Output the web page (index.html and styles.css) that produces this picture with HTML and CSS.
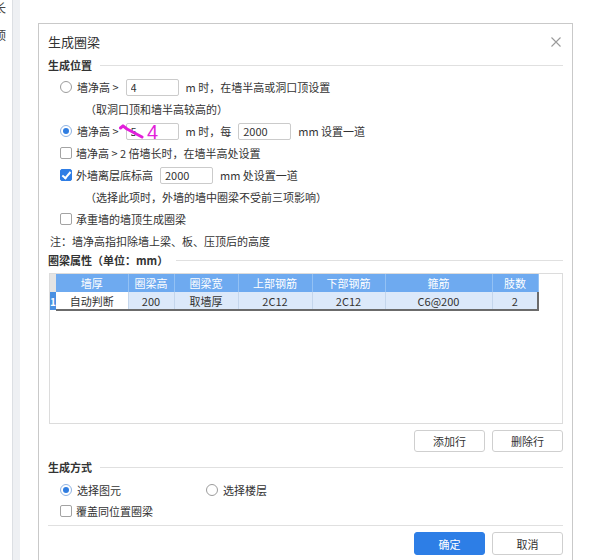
FILE: index.html
```html
<!DOCTYPE html>
<html lang="zh-CN">
<head>
    <meta charset="UTF-8">
    <title>生成圈梁</title>
    <link rel="stylesheet" href="styles.css">
</head>
<body>
    <aside class="side">
        <div class="side-text">长<br>顶</div>
    </aside>
    <div class="gutter"></div>

    <main class="stage">
        <div class="dialog">
            <div class="dialog-head">
                <span class="dialog-title">生成圈梁</span>
                <svg class="close" width="10" height="10" viewBox="0 0 10 10">
                    <path d="M0.5 0.5 L9.5 9.5 M9.5 0.5 L0.5 9.5" stroke="#9a9a9a" stroke-width="1.1" fill="none"/>
                </svg>
            </div>

            <!-- 生成位置 -->
            <div class="legend"><span>生成位置</span></div>
            <div class="row">
                <span class="radio"></span>
                <span>墙净高 &gt;</span>
                <input class="field" type="text" value="4">
                <span>m 时，在墙半高或洞口顶设置</span>
            </div>
            <div class="row sub">（取洞口顶和墙半高较高的）</div>
            <div class="row marked">
                <span class="radio on"></span>
                <span>墙净高 &gt;</span>
                <input class="field" type="text" value="5">
                <span>m 时，每</span>
                <input class="field" type="text" value="2000">
                <span>mm 设置一道</span>
                <!-- hand-drawn note on top of the screenshot -->
                <svg class="mark-stroke" width="26" height="16" viewBox="0 0 26 16">
                    <path d="M1.5 4 L4 1.8 L8 5 L23 13" stroke="#e21fd9" stroke-width="3" fill="none" stroke-linecap="round" stroke-linejoin="round"/>
                </svg>
                <span class="mark-num">4</span>
            </div>
            <div class="row">
                <span class="check"></span>
                <span>墙净高 &gt; 2 倍墙长时，在墙半高处设置</span>
            </div>
            <div class="row">
                <span class="check on"></span>
                <span>外墙离层底标高</span>
                <input class="field" type="text" value="2000">
                <span>mm 处设置一道</span>
            </div>
            <div class="row sub">（选择此项时，外墙的墙中圈梁不受前三项影响）</div>
            <div class="row">
                <span class="check"></span>
                <span>承重墙的墙顶生成圈梁</span>
            </div>
            <div class="row note">注：墙净高指扣除墙上梁、板、压顶后的高度</div>

            <!-- 圈梁属性 -->
            <div class="legend small"><span>圈梁属性（单位：mm）</span></div>
            <div class="grid-box">
                <table class="grid">
                    <tr>
                        <th class="num"></th>
                        <th class="c1">墙厚</th>
                        <th class="c2">圈梁高</th>
                        <th class="c3">圈梁宽</th>
                        <th class="c4">上部钢筋</th>
                        <th class="c5">下部钢筋</th>
                        <th class="c6">箍筋</th>
                        <th class="c7">肢数</th>
                    </tr>
                    <tr class="sel">
                        <td class="num">1</td>
                        <td class="cur">自动判断</td>
                        <td>200</td>
                        <td>取墙厚</td>
                        <td>2C12</td>
                        <td>2C12</td>
                        <td>C6@200</td>
                        <td class="last">2</td>
                    </tr>
                </table>
            </div>
            <div class="btn-row">
                <button class="btn">添加行</button>
                <button class="btn">删除行</button>
            </div>

            <!-- 生成方式 -->
            <div class="legend mode"><span>生成方式</span></div>
            <div class="row opts">
                <span class="opt"><span class="radio on"></span>选择图元</span>
                <span class="opt"><span class="radio"></span>选择楼层</span>
            </div>
            <div class="row">
                <span class="check"></span>
                <span>覆盖同位置圈梁</span>
            </div>

            <div class="footer">
                <button class="btn primary">确定</button>
                <button class="btn">取消</button>
            </div>
        </div>
    </main>
</body>
</html>
```

FILE: styles.css
```css
* {
    box-sizing: border-box;
}
html, body {
    margin: 0;
    padding: 0;
}
body {
    width: 605px;
    height: 560px;
    overflow: hidden;
    display: flex;
    background: #fff;
    color: #333;
    font-family: "Noto Sans CJK SC", "Microsoft YaHei", sans-serif;
    font-size: 11px;
}
/* left edge of the page behind the dialog */
.side {
    width: 13px;
    overflow: hidden;
    background: #fff;
    border-right: 1px solid #dcdfe3;
}
.side-text {
    margin: -6px 0 0 -6px;
    font-size: 12px;
    line-height: 27px;
    color: #444;
}
.gutter {
    width: 7px;
    background: #eef0f3;
}
.stage {
    flex: 1;
    padding: 23px 0 0 18px;
}
.dialog {
    width: 535px;
    height: 560px;
    padding: 0 9px;
    background: #fff;
    border: 1px solid #c9c9c9;
}
.dialog-head {
    display: flex;
    justify-content: space-between;
    align-items: center;
    height: 30px;
    padding-top: 6px;
}
.dialog-title {
    font-size: 13px;
    line-height: 24px;
    color: #333;
}
.close {
    margin-right: 2px;
}
.legend {
    display: flex;
    align-items: center;
    height: 22px;
    font-weight: bold;
    color: #333;
}
.legend::after {
    content: "";
    flex: 1;
    height: 1px;
    margin-left: 8px;
    background: #e0e0e0;
}
.legend.small {
    height: 16px;
}
.legend.mode {
    height: 20px;
    margin-top: 5px;
}
.row {
    display: flex;
    align-items: center;
    height: 22px;
    padding-left: 12px;
    white-space: nowrap;
}
.row.sub {
    padding-left: 37px;
}
.row.note {
    padding-left: 2px;
}
.radio {
    position: relative;
    width: 12px;
    height: 12px;
    margin-right: 5px;
    border: 1px solid #9c9c9c;
    border-radius: 50%;
    background: #fff;
}
.radio.on {
    border-color: #8fb3e3;
}
.radio.on::after {
    content: "";
    position: absolute;
    left: 2px;
    top: 2px;
    width: 6px;
    height: 6px;
    border-radius: 50%;
    background: #2f7de1;
}
.check {
    position: relative;
    width: 12px;
    height: 12px;
    margin-right: 4px;
    border: 1px solid #a3a3a3;
    border-radius: 2px;
    background: #fff;
}
.check.on {
    border-color: #2e7de5;
    background: #2e7de5;
}
.check.on::after {
    content: "";
    position: absolute;
    left: 3px;
    top: 0;
    width: 3px;
    height: 7px;
    border: solid #fff;
    border-width: 0 2px 2px 0;
    transform: rotate(40deg);
}
.field {
    width: 53px;
    height: 17px;
    margin: 0 7px;
    padding: 0 4px;
    border: 1px solid #cbcbcb;
    border-radius: 2px;
    font: inherit;
    color: #333;
    outline: none;
}
.marked {
    position: relative;
}
.mark-stroke {
    position: absolute;
    left: 71px;
    top: 4px;
}
.mark-num {
    position: absolute;
    left: 99px;
    top: 1px;
    font-family: "Liberation Sans", sans-serif;
    font-size: 20px;
    line-height: 22px;
    color: #e21fd9;
}
/* property table */
.grid-box {
    height: 151px;
    margin-top: 5px;
    margin-left: 1px;
    border: 1px solid #dcdcdc;
}
.grid {
    border-collapse: collapse;
    table-layout: fixed;
    width: 488px;
}
.grid th, .grid td {
    height: 18px;
    padding: 0;
    text-align: center;
    font-weight: normal;
    white-space: nowrap;
}
.grid th {
    background: #6eaaf0;
    color: #fff;
    border-right: 1px solid #93c1f4;
}
.grid th.num {
    width: 6px;
    background: #e4e4e4;
    border-right: none;
}
.grid .c1 { width: 72px; }
.grid .c2 { width: 46px; }
.grid .c3 { width: 64px; }
.grid .c4 { width: 74px; }
.grid .c5 { width: 73px; }
.grid .c6 { width: 107px; }
.grid .c7 { width: 46px; }
.grid td {
    background: #dce9fa;
    color: #333;
    border-right: 1px solid #c4d6ec;
    border-bottom: 2px solid #6b6b6b;
}
.grid td.num {
    background: #4a90e2;
    color: #fff;
    font-weight: bold;
    font-size: 10px;
    text-align: left;
    border: none;
}
.grid td.cur {
    background: #fff;
}
.grid td.last {
    border-right: 2px solid #6b6b6b;
}
.btn-row {
    display: flex;
    justify-content: flex-end;
    gap: 7px;
    margin-top: 6px;
}
.btn {
    width: 71px;
    height: 22px;
    padding: 0;
    border: 1px solid #cfcfcf;
    border-radius: 3px;
    background: #fff;
    color: #333;
    font: inherit;
}
.btn.primary {
    background: #2d7ee6;
    border-color: #2d7ee6;
    color: #fff;
}
.row.opts {
    height: 21px;
    margin-top: 2px;
}
.opt {
    display: flex;
    align-items: center;
    width: 146px;
}
.footer {
    display: flex;
    justify-content: flex-end;
    gap: 7px;
    margin-top: 3px;
    padding-top: 6px;
    border-top: 1px solid #e0e0e0;
}
.footer .btn {
    height: 23px;
}
```
